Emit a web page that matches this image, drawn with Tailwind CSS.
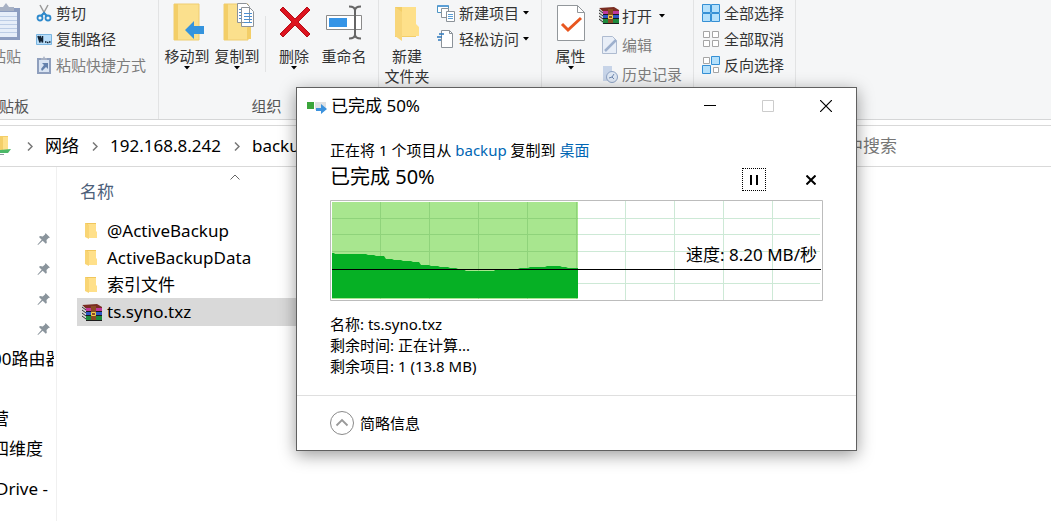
<!DOCTYPE html>
<html lang="zh-CN">
    <head>
        <meta charset="UTF-8">
        <meta name="viewport" content="width=device-width, initial-scale=1.0">

        <!-- Title -->
        <title> backup </title>

        <!-- TailwindCSS -->
        <script src="https://cdn.jsdelivr.net/npm/@tailwindcss/browser@4"></script>
    </head>
    <body class="relative flex h-screen flex-col overflow-hidden bg-white font-['Noto_Sans','Noto_Sans_CJK_SC',sans-serif] text-[15px] text-black">

        <!-- Shared icons -->
        <svg class="hidden">
            <symbol id="icon-folder" viewBox="0 0 14 18">
                <path fill="#f0c65c" d="M1 1h11v14H1z" />
                <path fill="#ffe08a" d="M4 2h8v7l1 1v6H4z" />
                <path fill="#f9d574" d="M1 1l4 2v14l-4-2z" />
            </symbol>
            <symbol id="icon-rar" viewBox="0 0 20 17">
                <path fill="#7a2d22" d="M0 1l15-1 5 3v2H4z" />
                <path fill="#d9d9d9" d="M0 1l4 4v12l-4-4z" />
                <path stroke="#333" d="M0 3l4 3M0 6l4 3M0 9l4 3M0 12l4 3" />
                <path fill="#c0389a" d="M4 4h16v4H4z" />
                <path fill="#2e58c4" d="M4 8h16v4H4z" />
                <path fill="#1d8a3c" d="M4 12h16v4H4z" />
                <path stroke="#1b1b1b" d="M4 7.500h16M4 11.500h16M4 16.500h16" />
                <path fill="#8b4a25" d="M9 2h5v14H9z" />
                <path fill="none" stroke="#f1cf4a" d="M9.500 8.500h4v3h-4z" />
            </symbol>
            <symbol id="icon-down" viewBox="0 0 6 4">
                <path d="M0 0h6L3 3.500z" />
            </symbol>
            <symbol id="icon-chevron" viewBox="0 0 6 9">
                <path fill="none" stroke="#777" stroke-width="1.500" d="M1 .5l4 4-4 4" />
            </symbol>
            <symbol id="icon-pin" viewBox="0 0 14 14">
                <path fill="#8a949c" d="M8.500 1L13 5.500l-1.500.5-2 2 .3 2.700-1 1L5.700 8.800 1 13l-.5-.5L4.700 7.800 2 5l1-1 2.700.4 2.300-2z" />
            </symbol>
        </svg>

        <!-- Ribbon -->
        <header class="flex h-30 shrink-0 border-b border-[#d5d6d7] bg-[#f5f6f7] leading-5 text-[#333]">
            <section class="flex w-[159px] flex-col justify-between border-r border-[#e2e3e4] pb-[3px]">
                <div class="flex">
                    <button class="-ml-4 flex w-11 shrink-0 flex-col items-center pt-[3px] text-[#7d7d7d]">
                        <svg class="mb-1 h-[39px] w-7" viewBox="0 0 28 39">
                            <path fill="#8c9dc0" d="M0 5h28v32H0z" />
                            <path fill="#e6eef9" d="M2 9h23v25H2z" />
                            <path stroke="#bccde6" d="M2 13.500h23M2 17.500h23M2 21.500h23M2 25.500h23M2 29.500h23" />
                            <path fill="#a7b1c4" d="M6 8V4h5l3-4 3 4h5v4z" />
                        </svg>
                        粘贴
                    </button>
                    <div class="flex flex-col pl-2">
                        <button class="flex h-[26px] items-center gap-1">
                            <svg class="h-[18px] w-4" viewBox="0 0 16 18" fill="none">
                                <path stroke="#999" stroke-width="1.500" d="M4 1l6 11M12 1L6 12" />
                                <circle cx="4" cy="14" r="2.500" stroke="#2d89cc" stroke-width="1.800" />
                                <circle cx="12" cy="14" r="2.500" stroke="#2d89cc" stroke-width="1.800" />
                                <path stroke="#2d89cc" stroke-width="2" d="M5 12l3-3 3 3" />
                            </svg>
                            剪切
                        </button>
                        <button class="flex h-[26px] items-center gap-1">
                            <svg class="h-[18px] w-4" viewBox="0 0 16 18">
                                <path fill="#b9defa" stroke="#78b4e0" d="M.5 4.500h15v10H.5z" />
                                <path fill="none" stroke="#123" stroke-width="1.500" d="M2 6l2 6.500V6l2.500 6.500V6M9 12h1.500M11 12.500h1.500M13 12h1.500" />
                            </svg>
                            复制路径
                        </button>
                        <button class="flex h-[26px] items-center gap-1 text-[#7d7d7d]">
                            <svg class="h-[18px] w-4" viewBox="0 0 16 18">
                                <path fill="#d9e4f3" stroke="#8f9fbd" stroke-width="2" d="M2 3h12v14H2z" />
                                <path fill="#a7b1c4" d="M5 4V2h2l1-2 1 2h2v2z" />
                                <path fill="#6481ac" d="M6 7h6v6l-2-2-4 4-1-2 3-4z" />
                            </svg>
                            粘贴快捷方式
                        </button>
                    </div>
                </div>
                <p class="-ml-4 text-[#555]">剪贴板</p>
            </section>

            <section class="flex w-[220px] flex-col justify-between border-r border-[#e2e3e4] pb-[3px]">
                <div class="flex pl-[3px]">
                    <button class="flex w-[50px] flex-col items-center pt-[3px]">
                        <svg class="mb-1 h-[39px] w-[34px]" viewBox="0 0 34 39">
                            <path fill="#fbe08d" stroke="#efcd70" d="M4 1h25v36H4z" />
                            <path fill="#f3ce68" d="M4 1h4v36H4z" />
                            <path fill="#3594dd" d="M15 27l9-9v5h10v8H24v5z" />
                        </svg>
                        移动到
                        <svg class="h-1 w-1.5"><use href="#icon-down" /></svg>
                    </button>
                    <button class="flex w-[50px] flex-col items-center pt-[3px]">
                        <svg class="mb-1 h-[39px] w-[34px]" viewBox="0 0 34 39">
                            <path fill="#fbe08d" stroke="#efcd70" d="M4 1h24v36H4z" />
                            <path fill="#f3ce68" d="M4 1h4v36H4zM27 25l4-3v14h-4z" />
                            <path fill="#fff" stroke="#8e9398" d="M17.500.5h9l3 3v16h-12zM21.500 4.500h8l4 4v15h-12z" />
                            <path stroke="#4d8fd0" d="M19 6.500h2M19 9.500h2M19 12.500h2M19 15.500h2M24 10.500h8M24 13.500h8M24 16.500h8M24 19.500h8" />
                        </svg>
                        复制到
                        <svg class="h-1 w-1.5"><use href="#icon-down" /></svg>
                    </button>
                    <div class="mx-[3px] mt-4 h-14 w-px bg-[#e2e3e4]"></div>
                    <button class="flex w-[50px] flex-col items-center pt-[3px]">
                        <svg class="mb-1 h-[39px] w-[34px]" viewBox="0 0 34 39">
                            <path fill="#dd1420" stroke="#b50d17" d="M6 4l12 12L30 4l3 3-12 12 12 12-3 3-12-12L6 34l-3-3 12-12L3 7z" />
                        </svg>
                        删除
                        <svg class="h-1 w-1.5"><use href="#icon-down" /></svg>
                    </button>
                    <button class="flex w-[50px] flex-col items-center pt-[3px]">
                        <svg class="mb-1 h-[39px] w-9" viewBox="0 0 36 39" fill="none">
                            <path fill="#fff" stroke="#8a8a8a" d="M.5 12.500h35v14H.5z" />
                            <path fill="#3594e6" d="M3 15h18v9H3z" />
                            <path stroke="#666" stroke-width="2" d="M23 3.500q6 0 6 4v24q0 4-6 4M35 3.500q-6 0-6 4v24q0 4 6 4" />
                        </svg>
                        重命名
                    </button>
                </div>
                <p class="pr-1 text-center text-[#555]">组织</p>
            </section>

            <section class="flex w-[163px] flex-col justify-between border-r border-[#e2e3e4] pb-[3px]">
                <div class="flex">
                    <button class="flex w-14 flex-col items-center pt-[3px]">
                        <svg class="mb-1 h-[39px] w-7" viewBox="0 0 28 39">
                            <path fill="#f3ce68" d="M2 4h21v30H2z" />
                            <path fill="#fee08a" d="M9 4h14v17l3 3v9H9z" />
                            <path fill="#f8d67a" d="M2 4l7 5v29l-7-5z" />
                        </svg>
                        新建<br>文件夹
                    </button>
                    <div class="flex flex-col pl-0.5">
                        <button class="flex h-[26px] items-center gap-1">
                            <svg class="h-[18px] w-[18px]" viewBox="0 0 18 18" fill="#fff">
                                <path stroke="#4d95c4" d="M.5 1.500h11v7H.5z" />
                                <path stroke="#8b9299" d="M4.500 4.500h7v9h-7z" />
                                <path stroke="#8b9299" d="M9.500 7.500h8v10h-8z" />
                                <path stroke="#5c9fd6" d="M11 10.500h5M11 12.500h5M11 14.500h5" />
                                <path stroke="#5c9fd6" stroke-width="2" d="M1 2h10" />
                            </svg>
                            新建项目
                            <svg class="h-1 w-1.5"><use href="#icon-down" /></svg>
                        </button>
                        <button class="flex h-[26px] items-center gap-1">
                            <svg class="h-[18px] w-[18px]" viewBox="0 0 18 18" fill="none">
                                <path fill="#fff" stroke="#8b9299" d="M4.500.5h8l3 3v14h-11z" />
                                <path stroke="#8b9299" d="M12.500.5v3h3" />
                                <path stroke="#2f79bd" stroke-width="1.500" d="M2 4h5M0 7h5M1 10h3" />
                            </svg>
                            轻松访问
                            <svg class="h-1 w-1.5"><use href="#icon-down" /></svg>
                        </button>
                    </div>
                </div>
            </section>

            <section class="flex w-[152px] flex-col justify-between border-r border-[#e2e3e4] pb-[3px]">
                <div class="flex">
                    <button class="flex w-[57px] flex-col items-center pt-[3px]">
                        <svg class="mb-1 h-[39px] w-[30px]" viewBox="0 0 30 39" fill="none">
                            <path fill="#fff" stroke="#92979b" d="M1.500 2.500h20l7 7v28h-27z" />
                            <path stroke="#92979b" d="M21.500 2.500v7h7" />
                            <path stroke="#e8561f" stroke-width="3" d="M6 21l6 6 13-12" />
                        </svg>
                        属性
                        <svg class="h-1 w-1.5"><use href="#icon-down" /></svg>
                    </button>
                    <div class="flex flex-col pt-px">
                        <button class="flex h-[29px] items-center gap-[3px]">
                            <svg class="h-[17px] w-5"><use href="#icon-rar" /></svg>
                            打开
                            <svg class="ml-1 h-1 w-1.5"><use href="#icon-down" /></svg>
                        </button>
                        <button class="flex h-[29px] items-center gap-[3px] text-[#7d7d7d]">
                            <svg class="h-[18px] w-5" viewBox="0 0 20 18">
                                <path fill="#e8eef7" stroke="#aebbd0" d="M3.500.5h10l4 4v13h-14z" />
                                <path stroke="#9eb0cd" stroke-width="2.500" d="M6 15L17 4" />
                            </svg>
                            编辑
                        </button>
                        <button class="flex h-[29px] items-center gap-[3px] text-[#7d7d7d]">
                            <svg class="h-[18px] w-5" viewBox="0 0 20 18">
                                <path fill="#c7d4e8" d="M4 1h9v15H4z" />
                                <circle cx="13" cy="12" r="5.500" fill="#dfe8f4" stroke="#8ea3c4" />
                                <path fill="none" stroke="#6f88b0" d="M10 13l3-1 2-3M13 12l2 2" />
                            </svg>
                            历史记录
                        </button>
                    </div>
                </div>
            </section>

            <section class="flex w-[102px] flex-col border-r border-[#e2e3e4] pl-2">
                <button class="flex h-[26px] items-center gap-1">
                    <svg class="h-[18px] w-[18px]" viewBox="0 0 18 18" fill="#b4e0fb" stroke="#3590d5">
                        <path d="M.5.500h8v8h-8zM9.500.500h8v8h-8zM.5 9.500h8v8h-8zM9.500 9.500h8v8h-8z" />
                    </svg>
                    全部选择
                </button>
                <button class="flex h-[26px] items-center gap-1">
                    <svg class="h-[18px] w-[18px]" viewBox="0 0 18 18" fill="#fff" stroke="#a5a5a5">
                        <path d="M1.500 1.500h6v6h-6zM10.500 1.500h6v6h-6zM1.500 10.500h6v6h-6zM10.500 10.500h6v6h-6z" />
                    </svg>
                    全部取消
                </button>
                <button class="flex h-[26px] items-center gap-1">
                    <svg class="h-[18px] w-[18px]" viewBox="0 0 18 18">
                        <path fill="#fff" stroke="#a5a5a5" d="M1.500 1.500h6v6h-6zM11.500 11.500h5v5h-5z" />
                        <path fill="#b4e0fb" stroke="#3590d5" d="M9.500.500h8v8h-8zM.5 9.500h8v8h-8z" />
                    </svg>
                    反向选择
                </button>
            </section>
        </header>

        <!-- Address bar -->
        <div class="mt-[5px] flex h-[42px] shrink-0 items-center border-y border-[#d9d9d9] text-[17px]">
            <nav class="flex grow items-center">
                <svg class="mr-0.5 h-5 w-3" viewBox="0 0 12 20">
                    <path fill="#f3ce68" d="M0 0h8v14H0z" />
                    <path fill="#fee08a" d="M3 1h5v13H3z" />
                    <path fill="#4cb868" d="M0 14l11-1-3 4H0z" />
                    <path stroke="#8f9aa0" d="M0 18.500h4" />
                </svg>
                <svg class="mr-3 ml-[13px] h-[9px] w-1.5"><use href="#icon-chevron" /></svg>
                <a href="#">网络</a>
                <svg class="mr-3 ml-[13px] h-[9px] w-1.5"><use href="#icon-chevron" /></svg>
                <a href="#">192.168.8.242</a>
                <svg class="mr-3 ml-[13px] h-[9px] w-1.5"><use href="#icon-chevron" /></svg>
                <a href="#">backup</a>
            </nav>
            <input class="w-[289px] placeholder:text-[#767676]" type="search" aria-label="搜索" placeholder="在 backup 中搜索">
        </div>

        <main class="flex grow text-[17px]">
            <!-- Navigation pane -->
            <aside class="w-[57px] shrink-0 overflow-hidden border-r border-[#f0f0f0] pt-[57px] pr-0.5">
                <ul class="flex flex-col items-end pr-[3px]">
                    <li class="flex h-[30px] items-center"><svg class="h-3.5 w-3.5"><use href="#icon-pin" /></svg></li>
                    <li class="flex h-[30px] items-center"><svg class="h-3.5 w-3.5"><use href="#icon-pin" /></svg></li>
                    <li class="flex h-[30px] items-center"><svg class="h-3.5 w-3.5"><use href="#icon-pin" /></svg></li>
                    <li class="flex h-[30px] items-center"><svg class="h-3.5 w-3.5"><use href="#icon-pin" /></svg></li>
                </ul>
                <ul class="-ml-2 overflow-hidden leading-[30px] whitespace-nowrap">
                    <li><a href="#">00路由器</a></li>
                    <li class="mt-[30px]"><a href="#">营</a></li>
                    <li><a href="#">四维度</a></li>
                    <li class="mt-2.5 pl-1"><a href="#">Drive -</a></li>
                </ul>
            </aside>

            <!-- File list -->
            <section class="grow pl-5">
                <button class="flex w-80 flex-col items-start pt-[7px] pl-[3px] text-[#4c607a]">
                    <svg class="ml-[150px] h-1.5 w-2.5" viewBox="0 0 10 6" fill="none"><path stroke="#666" d="M.5 5.500l4.500-4.500 4.500 4.500" /></svg>
                    <span class="leading-6">名称</span>
                </button>
                <ul class="mt-[13px] w-80">
                    <li class="flex h-[27px] items-center gap-2 pl-[7px]"><svg class="mr-px h-[18px] w-3.5"><use href="#icon-folder" /></svg>@ActiveBackup</li>
                    <li class="flex h-[27px] items-center gap-2 pl-[7px]"><svg class="mr-px h-[18px] w-3.5"><use href="#icon-folder" /></svg>ActiveBackupData</li>
                    <li class="flex h-[27px] items-center gap-2 pl-[7px]"><svg class="mr-px h-[18px] w-3.5"><use href="#icon-folder" /></svg>索引文件</li>
                    <li class="flex h-7 items-center gap-[5px] bg-[#d9d9d9] pl-[5px]"><svg class="h-[17px] w-5"><use href="#icon-rar" /></svg>ts.syno.txz</li>
                </ul>
            </section>
        </main>

        <!-- Copy dialog -->
        <div class="absolute top-[87px] left-[296px] w-[561px] border border-[#606060] bg-white shadow-[0_4px_16px_rgba(0,0,0,0.4)]" role="dialog" aria-labelledby="dialogTitle">
            <div class="flex h-9 items-center pr-px pl-2.5">
                <svg class="h-4 w-5" viewBox="0 0 20 16">
                    <path fill="#dfe1e3" d="M8 4h11v8H8z" />
                    <path fill="#3ba53b" d="M0 4h7v7H0z" />
                    <path fill="#3c92dd" d="M9 10h5V6l6 5-6 5v-3H9z" />
                </svg>
                <h1 class="ml-1 grow text-[17px] leading-6" id="dialogTitle">已完成 50%</h1>
                <button class="flex h-9 w-[58px] items-center justify-center" aria-label="最小化">
                    <svg class="h-3 w-3" viewBox="0 0 12 12"><path stroke="#000" d="M0 5.500h12" /></svg>
                </button>
                <button class="flex h-9 w-[58px] items-center justify-center" aria-label="最大化" disabled>
                    <svg class="h-3 w-3" viewBox="0 0 12 12" fill="none"><path stroke="#ccc" d="M.5.500h11v11H.5z" /></svg>
                </button>
                <button class="flex h-9 w-[58px] items-center justify-center" aria-label="关闭">
                    <svg class="h-3 w-3" viewBox="0 0 12 12" fill="none"><path stroke="#000" stroke-width="1.200" d="M0 0l12 12M12 0L0 12" /></svg>
                </button>
            </div>

            <div class="px-[33px] pt-4">
                <p class="leading-[21px]">正在将 1 个项目从 <a class="text-[#0066b4]" href="#">backup</a> 复制到 <a class="text-[#0066b4]" href="#">桌面</a></p>
                <div class="flex h-[39px] items-start">
                    <h2 class="grow text-xl leading-8">已完成 50%</h2>
                    <div class="flex gap-[33px] pt-[7px]">
                        <button class="flex h-[23px] w-6 items-center justify-center border border-dotted border-black" aria-label="暂停">
                            <svg class="h-2.5 w-2.5" viewBox="0 0 10 10"><path d="M1 0h2v10H1zM7 0h2v10H7z" /></svg>
                        </button>
                        <button class="flex h-[23px] w-6 items-center justify-center" aria-label="取消">
                            <svg class="h-2.5 w-2.5" viewBox="0 0 10 10"><path stroke="#000" stroke-width="2" d="M.5.500l9 9M9.500.500l-9 9" /></svg>
                        </button>
                    </div>
                </div>

                <!-- Transfer speed -->
                <div class="relative">
                    <svg class="w-full" viewBox="0 0 493 101" fill="none">
                        <path fill="#fff" stroke="#bcbcbc" d="M.5.500h492v100H.5z" />
                        <path fill="#a8e68f" d="M2 2h246v97H2z" />
                        <path stroke="#8fd37b" d="M50.500 2v97M99.500 2v97M148.500 2v97M197.500 2v97M246.500 2v97M2 18.500h246M2 34.500h246M2 51.500h246" />
                        <path stroke="#cde9d6" d="M295.500 1v99M344.500 1v99M393.500 1v99M442.500 1v99M248 18.500h242M248 34.500h242M248 51.500h242M248 83.500h242" />
                        <path fill="#06b025" d="M2 53h2l1 1h31l2 1h6l2 1h8l2 3h6l2 1h7l2 1h8l2 1h6l2 3h8l2 1h7l2 1h8l2 1h6l2 1h5l3 2h28l2-2h22l2-1h8l2-1h15l2-1h13l2 1h4l2 1h10v30H2z" />
                        <path stroke="#000" d="M2 69.500h489" />
                    </svg>
                    <p class="absolute top-[43px] right-1.5 text-[17px] leading-6">速度: 8.20 MB/秒</p>
                </div>

                <div class="mt-[13px] leading-[21px]">
                    <p>名称: ts.syno.txz</p>
                    <p>剩余时间: 正在计算...</p>
                    <p>剩余项目: 1 (13.8 MB)</p>
                </div>
            </div>

            <div class="mt-[18px] flex h-[55px] items-center border-t border-[#dfdfdf] px-[33px]">
                <button class="flex items-center gap-1.5">
                    <svg class="h-6 w-6" viewBox="0 0 24 24" fill="none" stroke="#8a8a8a">
                        <circle cx="12" cy="12" r="11.500" />
                        <path stroke="#999" stroke-width="1.800" d="M6.500 14.500L12 9l5.500 5.500" />
                    </svg>
                    简略信息
                </button>
            </div>
        </div>
    </body>
</html>
